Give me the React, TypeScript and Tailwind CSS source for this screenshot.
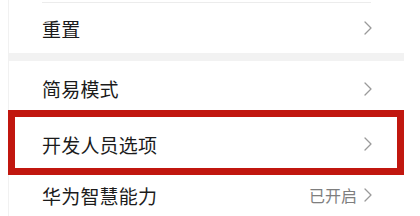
import React from "react";

function Chevron() {
  return (
    <svg width="10" height="16" viewBox="0 0 10 16" fill="none" className="shrink-0">
      <path d="M2 2 L8 8 L2 14" stroke="#9a9a9a" strokeWidth="1.3" strokeLinecap="round" strokeLinejoin="round" />
    </svg>
  );
}

function Row({ label, value, h }: { label: string; value?: string; h: string }) {
  return (
    <div className={`flex items-center justify-between pl-[33px] pr-[31px] ${h}`}>
      <span className="text-[19px] leading-none font-normal text-[#1b1b1b] tracking-[0.2px]">{label}</span>
      <div className="flex items-center gap-[6px]">
        {value && <span className="text-[16px] leading-none text-[#7e7e7e]">{value}</span>}
        <Chevron />
      </div>
    </div>
  );
}

export default function App() {
  return (
    <div
      className="relative w-[420px] h-[216px] overflow-hidden bg-white"
      style={{ fontFamily: '"Noto Sans CJK SC", "Noto Sans", sans-serif' }}
    >
      <div className="ml-[8px] w-[396px] border-l border-[#f1f1f1]">
        <div className="h-[2px]" />
        <div className="mx-[33px] h-px bg-[#ececec]" />
        <Row label="重置" h="h-[50px]" />
        <div className="h-[8px] bg-[#f2f2f2]" />
        <Row label="简易模式" h="h-[55px]" />
        <Row label="开发人员选项" h="h-[56px]" />
        <Row label="华为智慧能力" value="已开启" h="h-[46px]" />
      </div>
      <div className="absolute left-[8px] top-[110px] w-[396px] h-[65px] border-[7px] border-[#c1170f] pointer-events-none" />
    </div>
  );
}
